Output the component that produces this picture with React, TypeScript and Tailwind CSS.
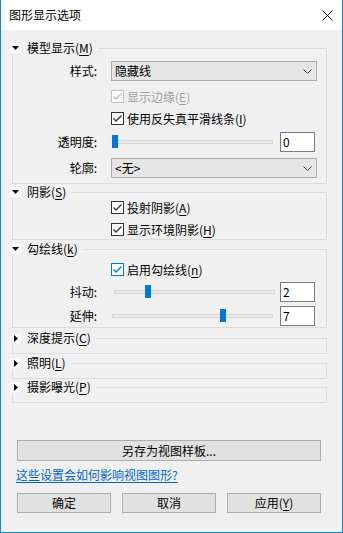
import { ReactNode } from 'react';

const Acc = ({ k }: { k: string }) => (
    <span>(<span className="underline underline-offset-2">{k}</span>)</span>
);

const Check = ({ state = 'on' }: { state?: 'on' | 'off' | 'hover' }) => {
    const color = state === 'off' ? '#c2c2c2' : state === 'hover' ? '#0078d7' : '#333333';
    const mark = state === 'off' ? '#bdbdbd' : state === 'hover' ? '#0078d7' : '#333333';
    return (
        <div className="w-[13px] h-[13px] border bg-white shrink-0 flex items-center justify-center" style={{ borderColor: color }}>
            <svg width="11" height="11" viewBox="0 0 11 11">
                <path d="M1.5 5.5 L4 8 L9.5 2.5" fill="none" stroke={mark} strokeWidth="1.3" />
            </svg>
        </div>
    );
};

const CheckRow = ({ children, state, mt }: { children: ReactNode; state?: 'on' | 'off' | 'hover'; mt: string }) => (
    <div className={`h-[13px] pl-[98px] flex items-center ${mt}`}>
        <Check state={state} />
        <span className={`ml-[3px] leading-[14px] ${state === 'off' ? 'text-[#a0a0a0]' : 'text-black'}`}>{children}</span>
    </div>
);

const Label = ({ children }: { children: ReactNode }) => (
    <div className="w-[84px] text-right leading-[14px] shrink-0">{children}</div>
);

const Combo = ({ label, value, mt = '' }: { label: string; value: string; mt?: string }) => (
    <div className={`h-[20px] flex items-center ${mt}`}>
        <Label>{label}</Label>
        <div className="ml-[14px] w-[206px] h-[20px] bg-[#e5e5e5] border border-[#acacac] flex items-center justify-between pl-[3px] pr-[4px]">
            <span className="leading-[14px]">{value}</span>
            <svg width="9" height="5" viewBox="0 0 9 5">
                <path d="M0.5 0.5 L4.5 4.5 L8.5 0.5" fill="none" stroke="#444" strokeWidth="1" />
            </svg>
        </div>
    </div>
);

const Slider = ({ label, value, thumb, trackMl, mt }: { label: string; value: string; thumb: number; trackMl: string; mt: string }) => (
    <div className={`h-[20px] flex items-center ${mt}`}>
        <Label>{label}</Label>
        <div className={`relative w-[161px] h-[20px] flex items-center ${trackMl}`}>
            <div className="w-full h-[4px] bg-[#e7eaea] border border-[#d6d6d6]" />
            <div className="absolute top-[3px] w-[6px] h-[13px] bg-[#0078d7]" style={{ left: thumb }} />
        </div>
        <div className="ml-auto mr-[11px] w-[35px] h-[20px] bg-white border border-[#7a7a7a] flex items-center pl-[2px]">
            <span className="leading-[14px]">{value}</span>
        </div>
    </div>
);

const Section = ({ title, open = true, bodyH, mt, children }: { title: ReactNode; open?: boolean; bodyH: string; mt: string; children?: ReactNode }) => (
    <div className={`ml-[11px] w-[315px] ${mt}`}>
        <div className="h-[14px] flex items-center">
            <div className="-ml-[2px] w-[11px] h-[10px] bg-[#fafafa] flex items-center justify-center shrink-0">
                {open ? (
                    <svg width="7" height="4" viewBox="0 0 7 4"><path d="M0 0 H7 L3.5 4 Z" fill="#000" /></svg>
                ) : (
                    <svg width="4" height="7" viewBox="0 0 4 7"><path d="M0 0 V7 L4 3.5 Z" fill="#000" /></svg>
                )}
            </div>
            <span className="ml-[6px] leading-[14px] whitespace-nowrap">{title}</span>
            <div className="ml-[5px] flex-1 h-[7px] self-end border-t border-r border-[#dcdcdc]" />
        </div>
        <div className={`border-l border-r border-b border-[#dcdcdc] flex flex-col ${bodyH}`}>{children}</div>
    </div>
);

const Btn = ({ children, w, h }: { children: ReactNode; w: string; h: string }) => (
    <div className={`${w} ${h} bg-[#e1e1e1] border border-[#adadad] flex items-center justify-center leading-[14px]`}>{children}</div>
);

export default function App() {
    return (
        <div className="w-[343px] h-[533px] bg-[#f0f0f0] border-l border-r border-b border-[#1883d7] flex flex-col text-[12px] text-black font-['Noto_Sans_CJK_SC',sans-serif] overflow-hidden">
            <div className="h-[30px] bg-white flex items-center pl-[8px] shrink-0">
                <span className="leading-[14px]">图形显示选项</span>
                <svg className="ml-auto mr-[9px]" width="11" height="11" viewBox="0 0 11 11">
                    <path d="M0.5 0.5 L10.5 10.5 M10.5 0.5 L0.5 10.5" stroke="#000" strokeWidth="1" />
                </svg>
            </div>

            <Section title={<>模型显示<Acc k="M" /></>} bodyH="h-[129px] pt-[6px]" mt="mt-[11px]">
                <Combo label="样式:" value="隐藏线" />
                <CheckRow state="off" mt="mt-[9px]">显示边缘<Acc k="E" /></CheckRow>
                <CheckRow mt="mt-[9px]">使用反失真平滑线条<Acc k="I" /></CheckRow>
                <Slider label="透明度:" value="0" thumb={0} trackMl="ml-[15px]" mt="mt-[7px]" />
                <Combo label="轮廓:" value="<无>" mt="mt-[6px]" />
            </Section>

            <Section title={<>阴影<Acc k="S" /></>} bodyH="h-[41px] pt-[2px]" mt="mt-[1px]">
                <CheckRow mt="">投射阴影<Acc k="A" /></CheckRow>
                <CheckRow mt="mt-[9px]">显示环境阴影<Acc k="H" /></CheckRow>
            </Section>

            <Section title={<>勾绘线<Acc k="k" /></>} bodyH="h-[72px] pt-[7px]" mt="mt-[2px]">
                <CheckRow state="hover" mt="">启用勾绘线<Acc k="n" /></CheckRow>
                <Slider label="抖动:" value="2" thumb={31} trackMl="ml-[17px]" mt="mt-[6px]" />
                <Slider label="延伸:" value="7" thumb={108} trackMl="ml-[15px]" mt="mt-[4px]" />
            </Section>

            <Section title={<>深度提示<Acc k="C" /></>} open={false} bodyH="h-[9px]" mt="mt-[3px]" />
            <Section title={<>照明<Acc k="L" /></>} open={false} bodyH="h-[9px]" mt="mt-[2px]" />
            <Section title={<>摄影曝光<Acc k="P" /></>} open={false} bodyH="h-[9px]" mt="mt-[1px]" />

            <div className="ml-[16px] mt-[37px]">
                <Btn w="w-[304px]" h="h-[21px]">另存为视图样板...</Btn>
            </div>
            <div className="ml-[15px] mt-[7px] h-[14px] leading-[14px] text-[#0066cc] underline underline-offset-2">这些设置会如何影响视图图形?</div>
            <div className="ml-[16px] mt-[11px] flex gap-[11px]">
                <Btn w="w-[94px]" h="h-[20px]">确定</Btn>
                <Btn w="w-[94px]" h="h-[20px]">取消</Btn>
                <Btn w="w-[94px]" h="h-[20px]">应用<Acc k="Y" /></Btn>
            </div>
        </div>
    );
}
